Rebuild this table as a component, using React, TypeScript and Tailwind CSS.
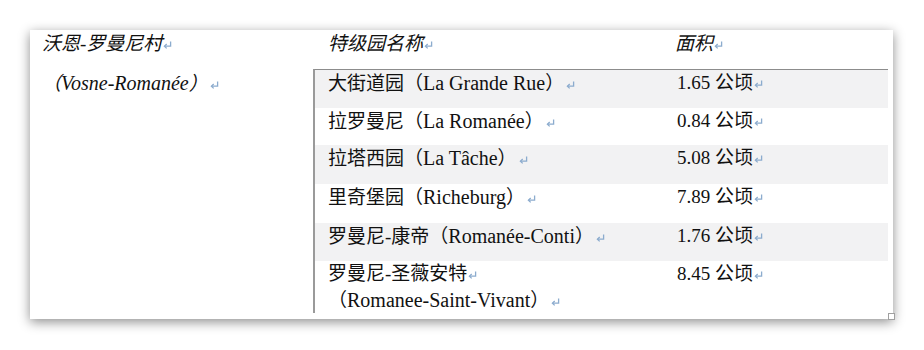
import React from "react";

const FONT = { fontFamily: '"Liberation Serif", "Noto Sans CJK SC", serif' };

interface Row {
    name: string[];
    area: string;
    cls: string;
}

const rows: Row[] = [
    { name: ["大街道园（La Grande Rue）"], area: "1.65 公顷", cls: "flex-none h-[38px] bg-[#f2f2f3]" },
    { name: ["拉罗曼尼（La Romanée）"], area: "0.84 公顷", cls: "flex-none h-[37px] bg-white" },
    { name: ["拉塔西园（La Tâche）"], area: "5.08 公顷", cls: "flex-none h-[39px] bg-[#f2f2f3]" },
    { name: ["里奇堡园（Richeburg）"], area: "7.89 公顷", cls: "flex-none h-[39px] bg-white" },
    { name: ["罗曼尼-康帝（Romanée-Conti）"], area: "1.76 公顷", cls: "flex-none h-[38px] bg-[#f2f2f3]" },
    { name: ["罗曼尼-圣薇安特", "（Romanee-Saint-Vivant）"], area: "8.45 公顷", cls: "flex-1 min-h-0 overflow-hidden bg-white" },
];

// Latin runs are set a touch larger than the CJK, as in the source document
function Mixed({ s }: { s: string }) {
    const parts = s.split(/([A-Za-zÀ-ÿ][A-Za-zÀ-ÿ \-]*[A-Za-zÀ-ÿ])/);
    return (
        <>
            {parts.map((p, i) =>
                i % 2 === 1 ? (
                    <span key={i} className="text-[20px]">
                        {p}
                    </span>
                ) : (
                    <React.Fragment key={i}>{p}</React.Fragment>
                )
            )}
        </>
    );
}

// Word's paragraph mark
function Mark({ gap = 0 }: { gap?: number }) {
    return (
        <svg
            width="9"
            height="8"
            viewBox="0 0 9 8"
            className={gap ? "inline-block align-middle ml-[2px] -mt-[2px]" : "inline-block align-middle ml-[1px] -mt-[2px]"}
            fill="none"
            stroke="#8cacce"
            strokeWidth="1.3"
        >
            <path d="M7.6 0.5V5.2H1.6" />
            <path d="M3.7 3L1.4 5.2L3.7 7.4" />
        </svg>
    );
}

export default function App() {
    return (
        <div className="w-[924px] h-[350px] bg-white pt-[30px] pl-[30px] text-[#111]" style={FONT}>
            <div className="relative w-[863px] h-[289px] bg-white shadow-[0_3px_11px_rgba(0,0,0,0.45)] flex flex-col">
                {/* Header */}
                <div className="flex h-[39px] text-[19px] leading-[28px] italic">
                    <div className="w-[283px] pl-[12px]">
                        沃恩-罗曼尼村<Mark />
                    </div>
                    <div className="w-[347px] pl-[15px]">
                        特级园名称<Mark />
                    </div>
                    <div className="pl-[15px]">
                        面积<Mark />
                    </div>
                </div>

                {/* Body */}
                <div className="flex flex-1 min-h-0">
                    <div className="w-[283px] pl-[12px] text-[19px] leading-[28px] italic">
                        <Mixed s="（Vosne-Romanée）" />
                        <Mark gap={1} />
                    </div>
                    <div className="w-[575px] h-[244px] border-l-2 border-t border-l-[#9a9a9a] border-t-[#8c8c8c] flex flex-col text-[19px]">
                        {rows.map((r) => (
                            <div key={r.area} className={"flex " + r.cls}>
                                <div className="w-[347px] pl-[13px]">
                                    {r.name.map((line, i) => (
                                        <div key={line} className={i > 0 ? "h-[27px] leading-[27px]" : "h-[26px] leading-[26px]"}>
                                            <Mixed s={line} />
                                            <Mark gap={i > 0 || r.name.length === 1 ? 1 : 0} />
                                        </div>
                                    ))}
                                </div>
                                <div className="pl-[15px] h-[26px] leading-[26px]">
                                    {r.area}
                                    <Mark />
                                </div>
                            </div>
                        ))}
                    </div>
                </div>

                {/* table resize handle */}
                <span className="absolute left-[858px] top-[283px] w-[7px] h-[7px] border border-[#a0a0a0] bg-white" />
            </div>
        </div>
    );
}
